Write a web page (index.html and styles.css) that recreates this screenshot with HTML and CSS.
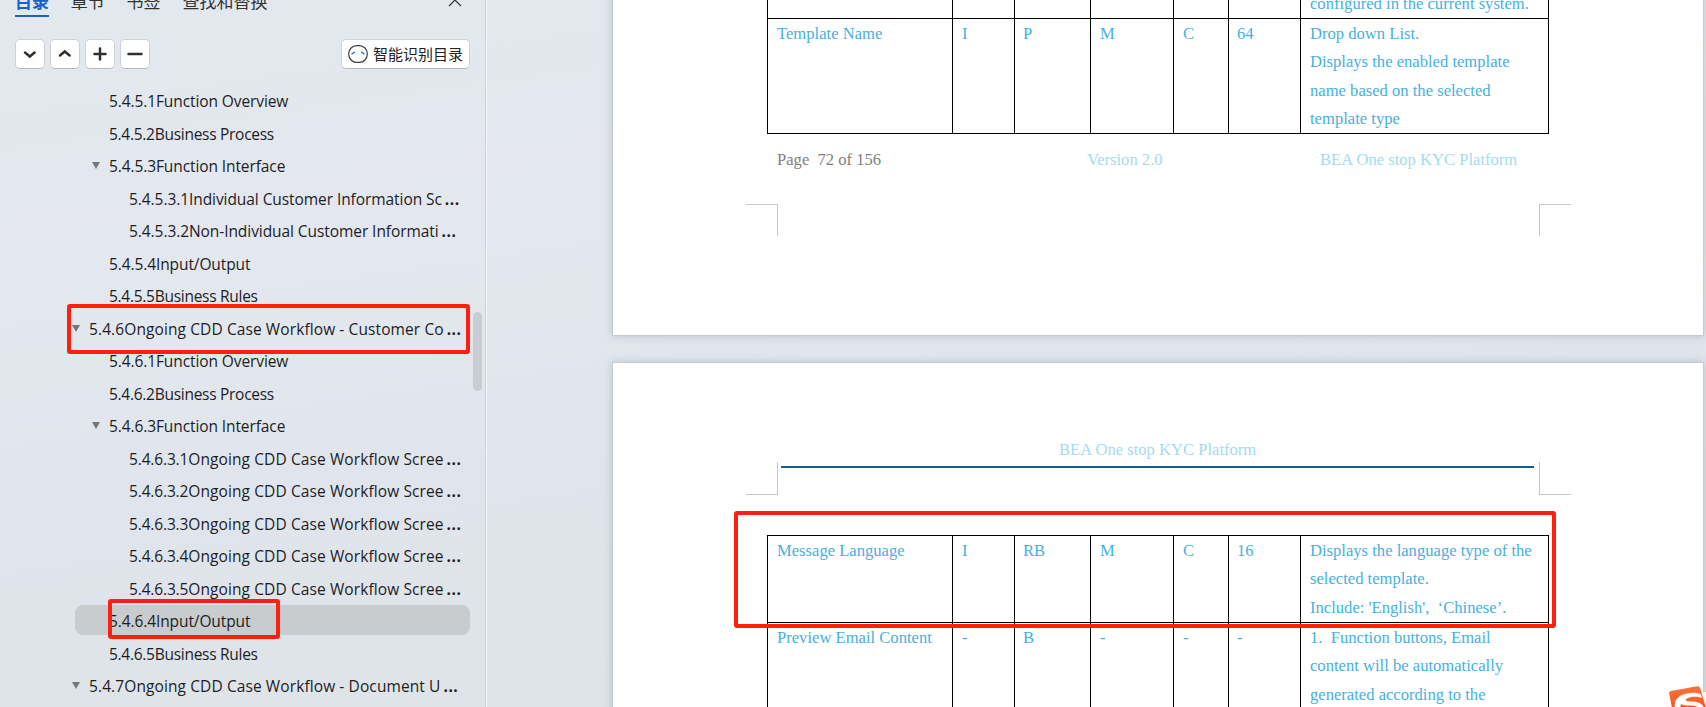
FILE: index.html
```html
<!DOCTYPE html>
<html lang="zh-CN">
<head>
<meta charset="utf-8">
<title>BEA One stop KYC Platform</title>
<link rel="stylesheet" href="styles.css">
</head>
<body>
<aside class="sidebar">
  <nav class="tabs">
    <span class="tab active">目录</span><span class="tab">章节</span><span class="tab">书签</span><span class="tab">查找和替换</span>
    <svg class="close" width="14" height="8" viewBox="0 0 14 8"><path d="M1 7 7 1l6 6" fill="none" stroke="#333" stroke-width="1.2"/></svg>
  </nav>
  <div class="tools">
    <button class="tool"><svg width="28" height="28" viewBox="0 0 28 28"><path d="m9 12.500 4.800 4 4.800-4"/></svg></button>
    <button class="tool"><svg width="28" height="28" viewBox="0 0 28 28"><path d="m9 15.500 4.800-4 4.800 4"/></svg></button>
    <button class="tool"><svg width="28" height="28" viewBox="0 0 28 28"><path d="M14 8.500v11M8.500 14h11"/></svg></button>
    <button class="tool"><svg width="28" height="28" viewBox="0 0 28 28"><path d="M7.500 14h13"/></svg></button>
    <button class="smart">
      <svg width="20" height="18" viewBox="0 0 20 18" fill="none"><rect x=".7" y=".7" width="18.600" height="16.600" rx="8" stroke="#3a3a3a" stroke-width="1.200"/><path d="m3.500 9.300 3.300-2.300M13.200 7l3.300 2.300" stroke="#2f55e8" stroke-width="1.400"/></svg>
      <span>智能识别目录</span>
    </button>
  </div>
  <ul class="tree">
    <li class="l2">5.4.5.1Function Overview</li>
    <li class="l2 tight">5.4.5.2Business Process</li>
    <li class="l2 open">5.4.5.3Function Interface</li>
    <li class="l3 snug">5.4.5.3.1Individual Customer Information Sc<b>...</b></li>
    <li class="l3 snug">5.4.5.3.2Non-Individual Customer Informati<b>...</b></li>
    <li class="l2">5.4.5.4Input/Output</li>
    <li class="l2 tight">5.4.5.5Business Rules</li>
    <li class="l1 open">5.4.6Ongoing CDD Case Workflow - Customer Co<b>...</b></li>
    <li class="l2">5.4.6.1Function Overview</li>
    <li class="l2 tight">5.4.6.2Business Process</li>
    <li class="l2 open">5.4.6.3Function Interface</li>
    <li class="l3"><span>5.4.6.3.1</span>Ongoing CDD Case Workflow Scree<b>...</b></li>
    <li class="l3"><span>5.4.6.3.2</span>Ongoing CDD Case Workflow Scree<b>...</b></li>
    <li class="l3"><span>5.4.6.3.3</span>Ongoing CDD Case Workflow Scree<b>...</b></li>
    <li class="l3"><span>5.4.6.3.4</span>Ongoing CDD Case Workflow Scree<b>...</b></li>
    <li class="l3"><span>5.4.6.3.5</span>Ongoing CDD Case Workflow Scree<b>...</b></li>
    <li class="l2 selected">5.4.6.4Input/Output</li>
    <li class="l2 tight">5.4.6.5Business Rules</li>
    <li class="l1 open">5.4.7Ongoing CDD Case Workflow - Document U<b>...</b></li>
  </ul>
  <div class="scroll-thumb"></div>
  <div class="mark mark-section"></div>
  <div class="mark mark-io"></div>
</aside>
<main class="workspace">
  <section class="page page-a">
    <table class="fields">
      <tbody>
      <tr class="r1"><td></td><td></td><td></td><td></td><td></td><td></td><td>configured in the current system.</td></tr>
      <tr class="r4"><td>Template Name</td><td>I</td><td>P</td><td>M</td><td>C</td><td>64</td><td>Drop down List.<br>Displays the enabled template<br>name based on the selected<br>template type</td></tr>
      </tbody>
    </table>
    <footer class="page-footer"><span class="pageno">Page&nbsp; 72 of 156</span><span>Version 2.0</span><span>BEA One stop KYC Platform</span></footer>
    <div class="crops crops-bottom"><i class="crop"></i><i class="crop"></i></div>
  </section>
  <section class="page page-b">
    <header class="page-header">BEA One stop KYC Platform</header>
    <div class="crops crops-top"><i class="crop"></i><hr class="rule"><i class="crop"></i></div>
    <table class="fields topped">
      <tbody>
      <tr class="r3"><td>Message Language</td><td>I</td><td>RB</td><td>M</td><td>C</td><td>16</td><td>Displays the language type of the<br>selected template.<br>Include: 'English',&nbsp; ‘Chinese’.</td></tr>
      <tr class="r4"><td>Preview Email Content</td><td>-</td><td>B</td><td>-</td><td>-</td><td>-</td><td>1.&nbsp; Function buttons, Email<br>content will be automatically<br>generated according to the</td></tr>
      </tbody>
    </table>
  </section>
  <div class="mark mark-row"></div>
  <div class="corner"></div>
  <svg class="ime" width="38" height="22" viewBox="0 0 38 22">
    <defs><linearGradient id="o" x1="0" y1="0" x2="0" y2="1"><stop offset="0" stop-color="#ff7040"/><stop offset="1" stop-color="#f4591d"/></linearGradient></defs>
    <path d="M3 5 29 .300Q31.500 0 32.200 2L38 22H4L1.200 7.500Q1 5.400 3 5Z" fill="url(#o)"/>
    <path d="M7 22C5 13 12 8 22 7c5-.5 9 .2 11 1.500l1 3.500c-5-2-12-1.500-15 .5-3 2 0 3 5 3 7 0 11 3 12 6.500h-5c-2-2-6-2.500-10-2.500-3 0-6-.5-8-1.500l-1 4Z" fill="#fff"/>
  </svg>
</main>
</body>
</html>
```
FILE: styles.css
```css
* { box-sizing: border-box; }
body {
  margin: 0;
  width: 1706px;
  height: 707px;
  overflow: hidden;
  display: flex;
  position: relative;
  background: linear-gradient(172deg, #e1e8ee 0%, #e2e8ee 10%, #e4e7ef 24%, #e2e7ee 42%, #e0e5ed 58%, #dfe4e8 74%, #dee3e6 100%);
}

/* Navigation panel */
.sidebar {
  position: relative;
  flex: none;
  width: 487px;
  height: 707px;
  overflow: hidden;
  border-right: 1px solid #f4f6f8;
  box-shadow: inset -1px 0 #cdcfd2;
  font-family: "Open Sans", "Noto Sans CJK SC", sans-serif;
  color: #1c1d1f;
}
.tabs {
  display: flex;
  gap: 21.8px;
  height: 28px;
  margin-top: -11px;
  padding-left: 15px;
  font: 17px/24px "Noto Sans CJK SC", sans-serif;
  color: #333;
}
.tab { height: 28px; }
.tab.active { color: #1b5fc9; font-weight: 700; border-bottom: 2px solid #1b5fc9; }
.close { margin: 10px 24px 0 auto; }
.tools { display: flex; gap: 5px; padding: 22px 16px 0 15px; }
.tool, .smart {
  height: 30px;
  padding: 0;
  border: 1px solid #cfd2d5;
  border-bottom-color: #b4b7ba;
  border-radius: 5px;
  background: #fff;
}
.tool { width: 30px; }
.tool svg { display: block; fill: none; stroke: #303030; stroke-width: 2.5; stroke-linecap: round; }
.smart {
  width: 129px;
  margin-left: auto;
  display: flex;
  align-items: center;
  gap: 5px;
  padding-left: 6px;
  font: 15px/28px "Noto Sans CJK SC", sans-serif;
  color: #222;
  white-space: nowrap;
}
.tree { list-style: none; margin: 16px 16px 0 75px; padding: 0; }
.tree li {
  position: relative;
  height: 29.5px;
  margin-bottom: 3.03px;
  border-radius: 8px;
  font-size: 15.5px;
  line-height: 32px;
  letter-spacing: -.1px;
  white-space: nowrap;
}
.tree b { margin-left: 3px; letter-spacing: .5px; }
.tree .l1 { padding-left: 14px; letter-spacing: .1px; }
.l2 { padding-left: 34px; }
.tree .l3 { padding-left: 54px; letter-spacing: .1px; }
.l3 span { letter-spacing: -.15px; }
.tree .snug { letter-spacing: -.07px; }
.tree .tight { letter-spacing: -.28px; }
.selected { background: #c8ccce; }
.open::before {
  content: "";
  position: absolute;
  top: 12px;
  margin-left: -17px;
  border: 4.500px solid transparent;
  border-top: 7px solid #777;
  border-bottom: 0;
}
.scroll-thumb {
  position: absolute;
  left: 473px;
  top: 312px;
  width: 9px;
  height: 79px;
  border-radius: 5px;
  background: #c9cdd1;
}
.mark { position: absolute; border: 4px solid #ff1f10; border-radius: 3px; }
.mark-section { left: 67px; top: 304px; width: 403px; height: 50px; }
.mark-io { left: 108px; top: 599px; width: 172px; height: 40px; }
.mark-row { left: 734px; top: 511px; width: 822px; height: 117px; }

/* Document area */
.workspace { flex: 1; height: 707px; padding-left: 125px; overflow: hidden; }
.page {
  width: 1092px;
  background: #fff;
  border: 1px solid #c9cbcd;
  box-shadow: 0 0 8px rgba(90, 100, 110, .28);
  font: 16.6px/28.75px "Liberation Serif", serif;
  color: #46b1e1;
}
.page-a { height: 346px; margin: -10px 0 26px; border-top: 0; }
.page-b { height: 400px; }
.fields {
  display: block;
  width: 782px;
  margin-left: 154px;
  border-left: 1px solid #000;
}
.fields tbody { display: block; }
.fields tr { display: grid; grid-template-columns: 185px 62px 76px 83px 55px 72px 248px; }
.topped { border-top: 1px solid #000; }
.fields td {
  padding: .8px 0 0 9px;
  line-height: 28.5px;
  white-space: nowrap;
  border-right: 1px solid #000;
  border-bottom: 1px solid #000;
}
.fields td:nth-child(3), .fields td:nth-child(6) { padding-left: 8px; }
.fields .r1 { grid-template-rows: 29px; }
.fields .r1 td { padding-top: 0; }
.fields .r3 { grid-template-rows: 87px; }
.fields .r4 { grid-template-rows: 115px; }
.page-footer {
  display: grid;
  grid-template-columns: 310px 233px auto;
  margin: 12px 0 0 164px;
  color: #a5daf2;
}
.pageno { color: #7f7f7f; }
.page-header { height: 99px; padding: 73px 0 0 446px; color: #a5daf2; }
.crops { display: flex; justify-content: space-between; width: 825px; margin-left: 133px; }
.crop { width: 32px; height: 32px; border: 0 solid #c6c6c6; }
.crops-bottom { margin-top: 29.25px; }
.crops-bottom .crop { border-top-width: 1px; }
.crops-top .crop { height: 33px; border-bottom-width: 1px; }
.crop:first-child { border-right-width: 1px; }
.crop:last-child { border-left-width: 1px; }
.crops-top { margin-bottom: 40px; }
.rule { flex: none; width: 753px; height: 2px; margin: 4px 1px 0 -1px; border: 0; background: #156082; }
.corner { position: absolute; left: 1703px; top: 691px; width: 3px; height: 16px; background: #f3f5f8; border-top: 1px solid #c3cbdc; }
.ime { position: absolute; left: 1668px; top: 686px; }
```
